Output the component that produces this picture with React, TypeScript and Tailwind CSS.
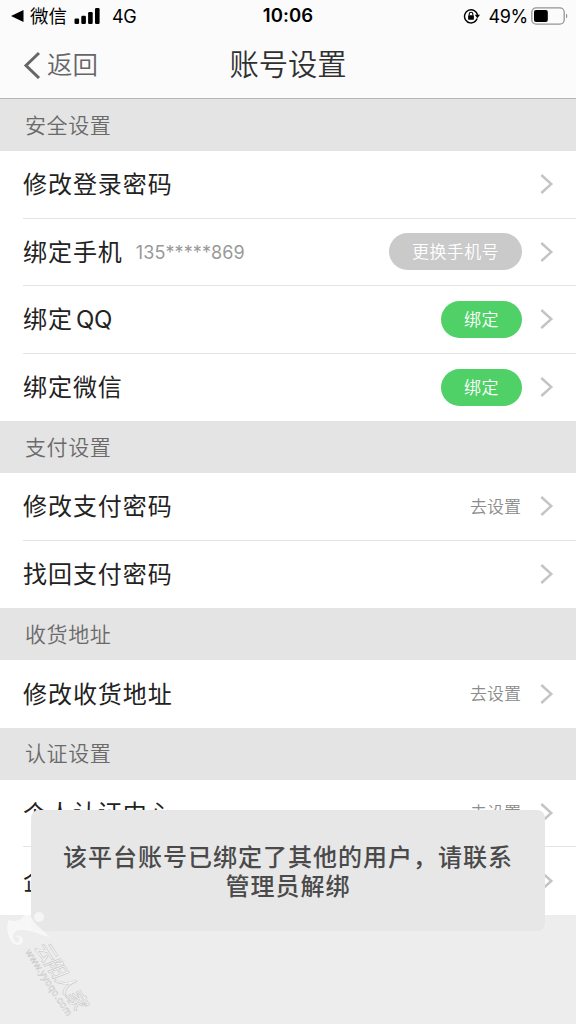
import clsx from "clsx";

type RowItem = {
	label: string;
	latin?: string;
	detail?: string;
	hint?: string;
	button?: string;
	disabled?: boolean;
};

type SectionItem = {
	title: string;
	rows: RowItem[];
};

const sections: SectionItem[] = [
	{
		title: "安全设置",
		rows: [
			{ label: "修改登录密码" },
			{ label: "绑定手机", detail: "135*****869", button: "更换手机号", disabled: true },
			{ label: "绑定", latin: "QQ", button: "绑定" },
			{ label: "绑定微信", button: "绑定" },
		],
	},
	{
		title: "支付设置",
		rows: [{ label: "修改支付密码", hint: "去设置" }, { label: "找回支付密码" }],
	},
	{
		title: "收货地址",
		rows: [{ label: "修改收货地址", hint: "去设置" }],
	},
	{
		title: "认证设置",
		rows: [{ label: "个人认证中心", hint: "去设置" }, { label: "企业认证中心" }],
	},
];

const StatusBar = () => (
	<div className="grid h-8 grid-cols-3 items-center pr-[8px] pl-[11px] text-black">
		<div className="flex items-center">
			<svg className="h-[12px] w-[13px]" viewBox="0 0 13 12">
				<path d="M0 6L12.5 0v12z" />
			</svg>
			<span className="ml-[6px] text-[18.5px] leading-8">微信</span>
			<svg className="ml-[7px] h-[16px] w-[27px]" viewBox="0 0 27 16">
				<rect x="0.5" y="10.5" width="4.6" height="5.5" rx="1.2" />
				<rect x="7.3" y="7.8" width="4.6" height="8.2" rx="1.2" />
				<rect x="14.1" y="4" width="4.6" height="12" rx="1.2" />
				<rect x="21" y="0" width="4.6" height="16" rx="1.2" />
			</svg>
			<span className="ml-[11px] text-[18px] tracking-[-0.3px]">4G</span>
		</div>
		<div className="-ml-[3px] text-center text-[18.5px] font-semibold tracking-[0.1px]">10:06</div>
		<div className="flex items-center justify-end">
			<svg className="h-[16px] w-[18px]" viewBox="0 0 18 16" fill="none" stroke="black">
				<path d="M12.5 13.3A6.6 6.6 0 1 1 14.6 7" strokeWidth="1.4" />
				<path d="M11.2 14A6.6 6.6 0 0 0 14.2 10.5" strokeWidth="1.4" />
				<path d="M11.8 6.8h5.2l-2.6 3.4z" fill="black" stroke="none" />
				<rect x="5.1" y="7.2" width="5.8" height="4.6" rx="0.7" fill="black" stroke="none" />
				<path d="M6.2 7.5V6a1.8 1.8 0 0 1 3.6 0v1.5" strokeWidth="1.1" />
			</svg>
			<span className="ml-[7px] text-[18px] tracking-[-0.3px]">49%</span>
			<svg className="ml-[3px] h-[18px] w-[37px]" viewBox="0 0 37 18">
				<rect x="0.8" y="0.8" width="32.4" height="16.4" rx="4.4" fill="none" stroke="#949494" strokeWidth="1.3" />
				<rect x="3" y="3" width="13.8" height="12" rx="2" />
				<path d="M35 6.4c1.8 1 1.8 4.2 0 5.2z" fill="#949494" />
			</svg>
		</div>
	</div>
);

const NavBar = () => (
	<div className="grid h-[66px] grid-cols-[1fr_auto_1fr] items-center px-[23px]">
		<button className="flex items-center text-left text-[#666668]">
			<svg className="h-[28px] w-[18px]" viewBox="0 0 18 28" fill="none" stroke="currentColor" strokeWidth="3">
				<path d="M16 2L3 14.500l13 12.500" />
			</svg>
			<span className="ml-[6px] text-[25.5px] font-[350] leading-8">返回</span>
		</button>
		<h1 className="text-[29.3px] font-[350] leading-8 text-[#303030]">账号设置</h1>
	</div>
);

const Row = ({ label, latin, detail, hint, button, disabled, last }: RowItem & { last: boolean }) => (
	<div className="h-[67.5px] bg-white pl-[23px]">
		<div
			className={clsx(
				"flex h-full items-center pr-[22px]",
				!last && "border-b border-[#e4e4e4]"
			)}
		>
			<span className="pt-[2px] text-[24px] tracking-[0.95px] text-[#222]">
				{label}
				{latin && <span className="ml-[3px] tracking-[-0.3px]">{latin}</span>}
			</span>
			{detail && (
				<span className="ml-[13px] pt-[1px] text-[18px] tracking-[0.1px] text-[#999]">{detail}</span>
			)}
			<div className="ml-auto flex items-center">
				{hint && <span className="mr-[18px] pt-[2px] text-[17px] font-[350] text-[#8c8c8c]">{hint}</span>}
				{button && (
					<button
						className={clsx(
							"mr-[17px] h-[37px] rounded-full px-[22.5px] pt-[2px] text-[17px] font-[350] tracking-[0.4px] text-white",
							disabled ? "w-[133px] bg-[#cacaca]" : "w-[81px] bg-[#50d167]"
						)}
					>
						{button}
					</button>
				)}
				<svg className="h-[22px] w-[15px]" viewBox="0 0 15 22" fill="none" stroke="#c3c3c8" strokeWidth="2.4">
					<path d="M2.3 2L12.3 11l-10 9" />
				</svg>
			</div>
		</div>
	</div>
);

const Watermark = () => (
	<svg className="absolute top-[896px] left-0 h-[128px] w-[110px]" viewBox="0 0 110 128">
		<g fill="#fff" opacity="0.6">
			<circle cx="39" cy="21" r="5" />
			<path d="M23 7c4 1 6 4 7 10 1 6 5 10 9 14l11 10c-9-1-13-5-20-6-7-1-12-2-16 2-2 3-1 8 3 9 2 0 3-2 2-4-1-2-3-1-4 0 1-4 8-3 8 2 0 6-8 7-12 1-4-7-5-15-2-22 2 3 6 2 10 1 7-3 8-10 4-17z" />
		</g>
		<g stroke="#c2c2c2" fill="#f4f4f4">
			<text
				transform="translate(34 51) rotate(57) skewX(-12)"
				fontSize="20"
				fontWeight="500"
				letterSpacing="-1"
				strokeWidth="0.5"
			>
				云阳人家
			</text>
			<text
				className="font-['Liberation_Sans']"
				transform="translate(25 56) rotate(57)"
				fontSize="10"
				textLength="77"
				strokeWidth="0.4"
			>
				www.yyoqo.com
			</text>
		</g>
	</svg>
);

export default function App() {
	return (
		<div
			lang="zh-CN"
			className="relative h-[1024px] overflow-hidden bg-[#ededed] font-['Inter','Noto_Sans_CJK_SC',sans-serif]"
		>
			<header className="h-[99px] border-b border-[#b5b5b5] bg-[#fbfbfc]">
				<StatusBar />
				<NavBar />
			</header>

			{sections.map((section) => (
				<section key={section.title}>
					<h2 className="flex h-[52px] items-center bg-[#e4e4e4] pt-[1px] pl-[25px] text-[21px] font-[350] tracking-[0.6px] text-[#6a6a6a]">
						{section.title}
					</h2>
					{section.rows.map((row, i) => (
						<Row key={row.label} {...row} last={i === section.rows.length - 1} />
					))}
				</section>
			))}

			<div className="absolute top-[810px] left-[31px] flex h-[121px] w-[514px] items-center justify-center rounded-[8px] bg-[#e7e7e8] pt-[2px] text-center text-[24px] font-medium leading-[29px] tracking-[1px] text-[#4a4a4a]">
				<p>
					该平台账号已绑定了其他的用户，请联系
					<br />
					管理员解绑
				</p>
			</div>

			<Watermark />
		</div>
	);
}
